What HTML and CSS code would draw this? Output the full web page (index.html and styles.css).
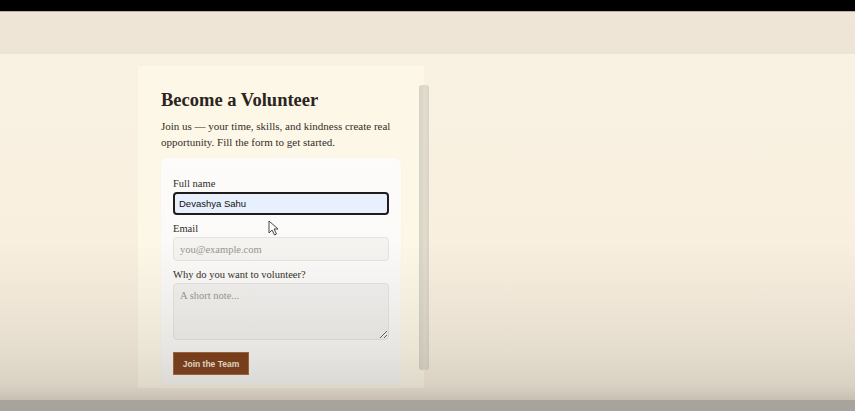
FILE: index.html
```html
<!DOCTYPE html>
<html lang="en">
<head>
<meta charset="utf-8">
<title>Become a Volunteer</title>
<link rel="stylesheet" href="styles.css">
</head>
<body>
<div class="topbar"></div>
<div class="header"></div>
<main class="main">
  <section class="card">
    <h1 class="title">Become a Volunteer</h1>
    <p class="intro">Join us — your time, skills, and kindness create real opportunity. Fill the form to get started.</p>
    <form class="form">
      <label class="label" for="name">Full name</label>
      <input class="input input-active" id="name" type="text" value="Devashya Sahu">
      <label class="label" for="email">Email</label>
      <input class="input" id="email" type="email" placeholder="you@example.com">
      <label class="label" for="why">Why do you want to volunteer?</label>
      <textarea class="input textarea" id="why" placeholder="A short note..."></textarea>
      <button class="btn" type="button">Join the Team</button>
    </form>
    <div class="scrollbar"></div>
  </section>
  <div class="shade"></div>
  <svg class="cursor" width="12" height="17" viewBox="0 0 12 17"><path d="M1 1 L1 13 L4 10 L6.5 15 L8.5 14 L6 9 L10 9 Z" fill="#fff" stroke="#444" stroke-width="1"/></svg>
</main>
<div class="bottombar"></div>
</body>
</html>
```
FILE: styles.css
```css
* { box-sizing: border-box; }
html, body { margin: 0; padding: 0; }
body {
  width: 855px;
  height: 411px;
  overflow: hidden;
  background: #f8f0e0;
  font-family: "Liberation Serif", "DejaVu Serif", serif;
}
.topbar { height: 11px; background: #000; }
.header {
  height: 43px;
  background: linear-gradient(180deg, #f0e6d8 0%, #ede4d5 100%);
  border-top: 1px solid #b9b1a4;
}
.main {
  position: relative;
  height: 346px;
  padding: 12px 0 0 138px;
  background: linear-gradient(180deg, #f9f1e1 0%, #f8efdf 60%, #f6eddd 100%);
}
.card {
  position: relative;
  width: 286px;
  height: 322px;
  padding: 24px 23px 2px 23px;
  background: #fdf7e7;
}
.title {
  margin: 0 0 8px 0;
  font-size: 18.5px;
  line-height: 21px;
  font-weight: bold;
  color: #2b2521;
}
.intro {
  margin: 0 0 8px 0;
  font-size: 11px;
  line-height: 15.5px;
  color: #342d27;
}
.form {
  display: flex;
  flex-direction: column;
  width: 240px;
  padding: 20px 12px 10px 12px;
  border-radius: 7px;
  background: linear-gradient(180deg, #fdfcfa 0%, #f8f7f5 100%);
  box-shadow: 0 0 2px rgba(0,0,0,0.04);
}
.label {
  display: block;
  font-size: 10.5px;
  line-height: 11px;
  margin-bottom: 3px;
  color: #322b25;
}
.input {
  width: 216px;
  height: 24px;
  margin: 0 0 8px 0;
  padding: 0 6px;
  border: 1px solid #e6e3de;
  border-radius: 4px;
  background: #f4f3f0;
  font-family: "Liberation Serif", serif;
  font-size: 10.5px;
  color: #222;
  outline: none;
}
.input::placeholder { color: #9a958f; }
.input-active {
  height: 23px;
  border: 2px solid #1f1d1c;
  background: #e8f0fe;
  padding: 0 4px;
  font-family: "Liberation Sans", Arial, sans-serif;
  font-size: 9.5px;
  color: #111;
}
.textarea {
  height: 57px;
  padding: 6px 6px;
  resize: vertical;
  margin-bottom: 12px;
  display: block;
  background: #f1f0ee;
}
.btn {
  align-self: flex-start;
  width: 76px;
  height: 23px;
  padding: 0;
  border: 1px solid #a0623a;
  background: #7a3812;
  color: #f1e4d8;
  font-family: "Liberation Sans", Arial, sans-serif;
  font-weight: bold;
  font-size: 8.5px;
}
.scrollbar {
  position: absolute;
  top: 19px;
  right: -5px;
  width: 10px;
  height: 285px;
  border-radius: 3px;
  background: linear-gradient(90deg, #d8d2c5 0%, #e2dccf 60%, #d9d3c6 100%);
}
.shade {
  position: absolute;
  left: 0; right: 0; top: 0; bottom: 0;
  pointer-events: none;
  background: linear-gradient(180deg,
    rgba(100,95,85,0) 0%,
    rgba(100,95,85,0) 54%,
    rgba(100,95,85,0.06) 71%,
    rgba(100,95,85,0.12) 86%,
    rgba(100,95,85,0.2) 96%,
    rgba(100,95,85,0.32) 100%);
}
.cursor {
  position: absolute;
  left: 268px;
  top: 166px;
}
.bottombar { height: 11px; background: #a8a39b; }
```
